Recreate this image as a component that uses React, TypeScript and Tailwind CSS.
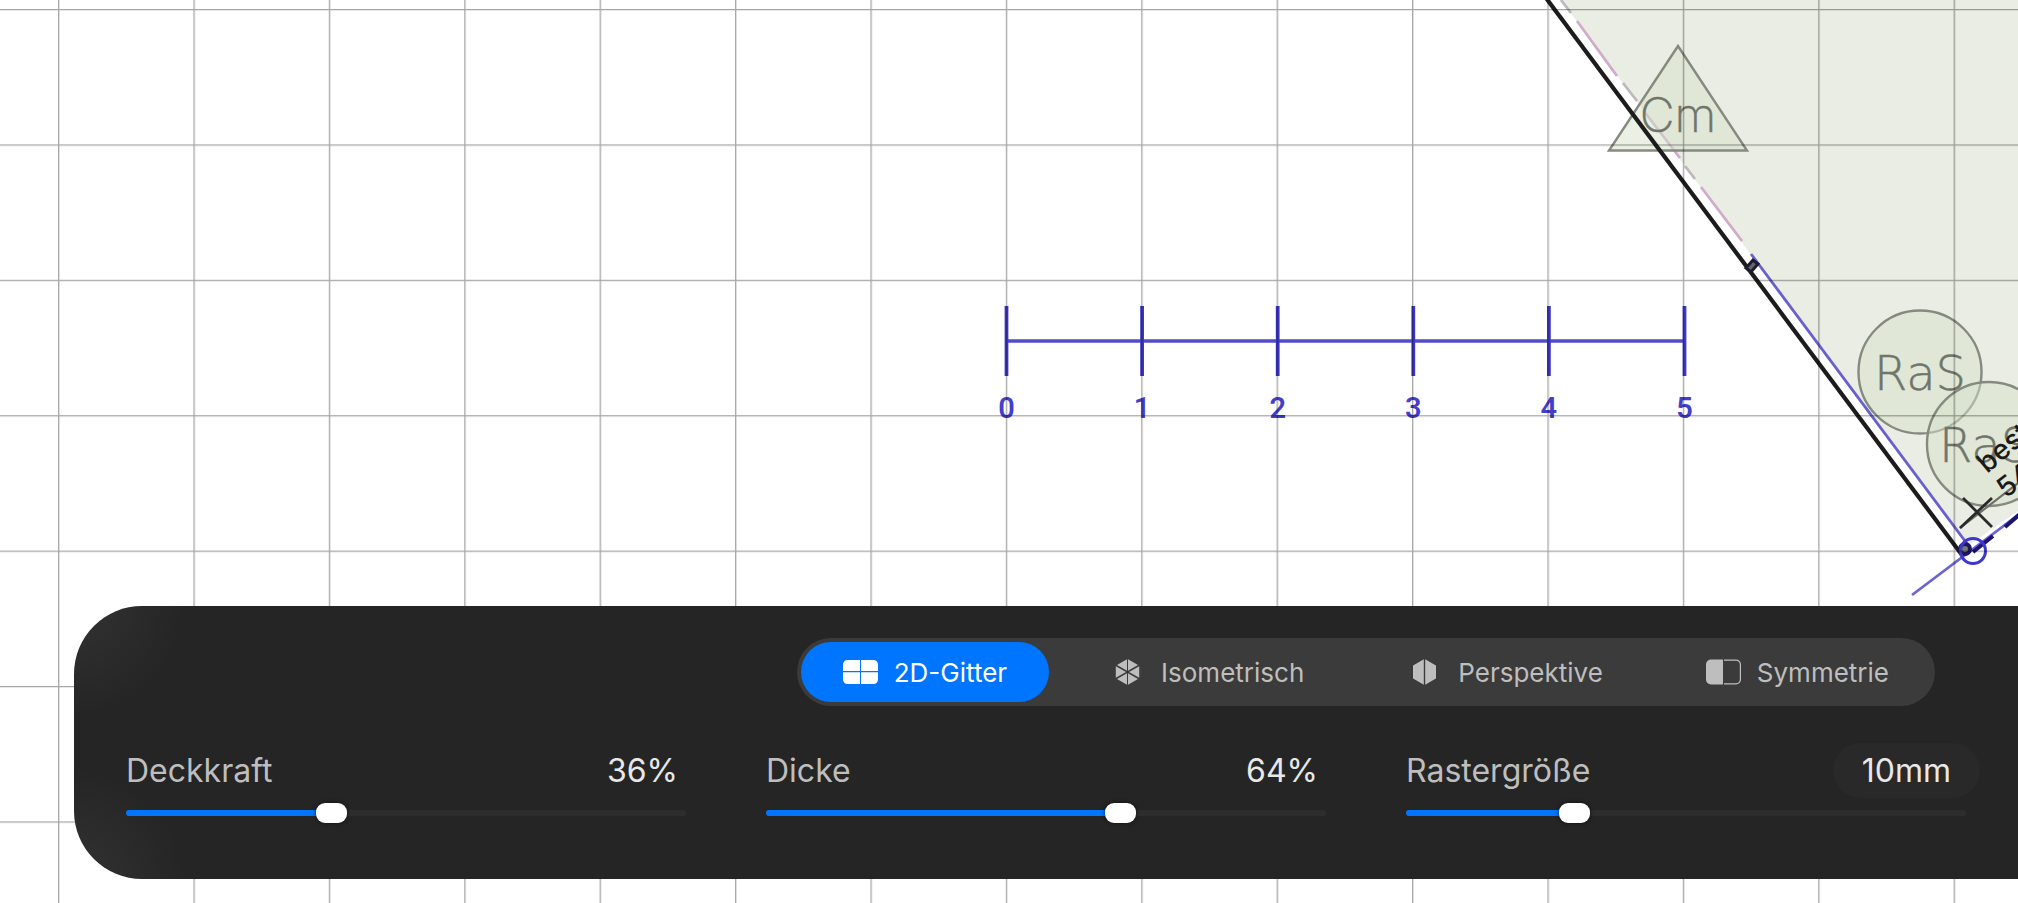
import { useState } from "react";
import type { ReactNode } from "react";

const TICKS = [0, 1, 2, 3, 4, 5];

function Plan() {
  return (
    <svg className="absolute inset-0 h-full w-full" aria-label="Plan">
      <defs>
        <pattern id="grid" x="58" y="9" width="135.4" height="135.4" patternUnits="userSpaceOnUse">
          <path d="M0 0.700H135.4M0.700 0V135.4" stroke="#000" strokeWidth="1.300" fill="none" />
        </pattern>
      </defs>

      <path d="M1561 0L1968 546L2018 511H4000V0Z" fill="#eaede4" />

      <g fill="none" strokeWidth="2.800">
        <path d="M1561 0L1571 13M1623 83L1637 101M1685 166L1695 179" stroke="#bdb9bd" />
        <path d="M1577 21L1617 76M1643 110L1680 158M1701 187L1742 241" stroke="#d0abcc" />
      </g>

      <g stroke="#858a80" strokeWidth="2.400" fill="#d6e2c9" fillOpacity="0.5">
        <path d="M1678 46L1609 150.500H1747Z" />
        <circle cx="1920" cy="372" r="61.500" />
        <circle cx="1989" cy="444" r="62" />
      </g>

      <g fill="#70756b" stroke="#70756b" strokeWidth="0.500" fontWeight="200" fontSize="48">
        <text x="1678" y="132" textAnchor="middle" fontFamily="Inter, sans-serif">Cm</text>
        <text x="1920" y="390" textAnchor="middle" fontFamily="DejaVu Sans, sans-serif">RaS</text>
        <text x="1939" y="462" fontFamily="DejaVu Sans, sans-serif">RaS</text>
      </g>

      <path d="M1546 -2L1962 555" stroke="#1c1c1c" strokeWidth="4.200" />
      <path d="M1751 254L1968 545" stroke="#6a60cc" strokeWidth="2.800" />
      <path d="M1746 268L1753 260L1758 264L1751 272Z" fill="#666" stroke="#1b1b33" strokeWidth="3" />

      <path d="M1912 595L2018 515" stroke="#6a64d8" strokeWidth="2.800" />
      <path d="M1973 552L1993 536M2005 527L2020 514" stroke="#1b1570" strokeWidth="4" />
      <path d="M1960 528L2022 480" stroke="#6c6f69" strokeWidth="2.200" />
      <path d="M1963 498L1992 527M1960 528L1992 498" stroke="#2a2a2a" strokeWidth="2.800" />
      <circle cx="1965" cy="549" r="5" fill="#777" stroke="#1d1760" strokeWidth="4" />
      <circle cx="1973" cy="551" r="12.500" fill="none" stroke="#3f38cc" strokeWidth="3" />

      <g fill="#1a1a1a" fontFamily="Inter, sans-serif" fontWeight="500" fontSize="28">
        <text transform="translate(1987 474) rotate(-40)">best</text>
        <text transform="translate(2006 499) rotate(-38)">54</text>
      </g>

      <g stroke="#3f38c8" fill="none">
        <path d="M1006 341H1685" strokeWidth="3.600" strokeOpacity="0.9" />
        {TICKS.map((t) => (
          <path key={t} d={`M${1006.5 + t * 135.6} 306V376`} strokeWidth="3.800" />
        ))}
      </g>
      <g fill="#453ecb" fontFamily="Roboto, sans-serif" fontWeight="600" fontSize="29" textAnchor="middle">
        {TICKS.map((t) => (
          <text key={t} x={1006.5 + t * 135.6} y="418">{t}</text>
        ))}
      </g>

      <rect width="100%" height="100%" fill="url(#grid)" opacity="0.35" />
    </svg>
  );
}

const icons: Record<string, ReactNode> = {
  grid: (
    <svg width="35" height="26" viewBox="0 0 35 26" fill="currentColor">
      <path d="M4.500 1H17V12H0V5.500A4.500 4.500 0 0 1 4.500 1ZM18 1H30.500A4.500 4.500 0 0 1 35 5.500V12H18ZM0 13.200H17V25H4.500A4.500 4.500 0 0 1 0 20.500ZM18 13.200H35V20.500A4.500 4.500 0 0 1 30.500 25H18Z" />
    </svg>
  ),
  iso: (
    <svg width="35" height="26" viewBox="0 0 35 26" fill="currentColor">
      <path d="M17 0.300V11.800L7 6ZM18 0.300L28 6L18 11.800ZM5.800 7.200L16 13L5.800 18.800ZM29.200 7.200V18.800L19 13ZM17 14.200V25.700L7 20ZM18 14.200L28 20L18 25.700Z" />
    </svg>
  ),
  perspective: (
    <svg width="35" height="26" viewBox="0 0 35 26" fill="currentColor">
      <path d="M16.800 0.200V25.800L6.500 19.800Q6 19.500 6 19V7Q6 6.500 6.500 6.200ZM18.200 0.200L28.500 6.200Q29 6.500 29 7V19Q29 19.500 28.500 19.800L18.200 25.800Z" />
    </svg>
  ),
  symmetry: (
    <svg width="35" height="26" viewBox="0 0 35 26" fill="currentColor">
      <path d="M5 0.500H17V25.500H5A5 5 0 0 1 0 20.500V5.500A5 5 0 0 1 5 0.500Z" />
      <path d="M18 1.100H30A4.400 4.400 0 0 1 34.400 5.500V20.500A4.400 4.400 0 0 1 30 24.900H18" fill="none" stroke="currentColor" strokeWidth="1.200" />
    </svg>
  ),
};

const MODES = [
  { id: "grid", label: "2D-Gitter" },
  { id: "iso", label: "Isometrisch" },
  { id: "perspective", label: "Perspektive" },
  { id: "symmetry", label: "Symmetrie" },
];

type SliderProps = { id: string; label: string; initial: number; format: (v: number) => string; pill?: boolean };

function Slider({ id, label, initial, format, pill }: SliderProps) {
  const [value, setValue] = useState(initial);
  return (
    <div className="flex min-w-0 flex-col gap-[5px]">
      <div className="flex h-[55px] items-center justify-between">
        <label htmlFor={id} className="text-[32px] leading-10 text-[#bebebe]">
          {label}
        </label>
        {pill ? (
          <button
            type="button"
            className="-mr-[14px] h-full rounded-full bg-[#292929] px-[29px] text-[32px] leading-10 text-[#e8e8e8]"
          >
            {format(value)}
          </button>
        ) : (
          <output htmlFor={id} className="pr-2 text-[32px] leading-10 text-[#e8e8e8]">
            {format(value)}
          </output>
        )}
      </div>
      <input
        id={id}
        type="range"
        min={0}
        max={100}
        value={value}
        onChange={(e) => setValue(Number(e.target.value))}
        style={{ backgroundImage: `linear-gradient(to right, #0075ff ${value}%, #2d2d2d ${value}%)` }}
        className="my-[7px] block h-[6px] w-full cursor-pointer appearance-none rounded-full [&::-webkit-slider-thumb]:h-5 [&::-webkit-slider-thumb]:w-[31px] [&::-webkit-slider-thumb]:appearance-none [&::-webkit-slider-thumb]:rounded-[9px] [&::-webkit-slider-thumb]:bg-white [&::-webkit-slider-thumb]:shadow-[0_0_4px_rgba(0,0,0,0.6)]"
      />
    </div>
  );
}

export default function App() {
  const [mode, setMode] = useState("grid");
  return (
    <main className="relative flex min-h-screen flex-col justify-end overflow-hidden bg-white pb-6 pl-[74px] font-[Inter,'Liberation_Sans',sans-serif]">
      <Plan />
      <section className="relative flex flex-col gap-[37px] rounded-l-[68px] bg-[#252525] bg-[radial-gradient(circle_at_0_0,#323232,transparent_110px),radial-gradient(circle_at_0_100%,#323232,transparent_110px)] px-[52px] pt-8 pb-14">
        <div className="mr-[31px] flex gap-[19px] self-end rounded-full bg-[#3b3b3b] p-1">
          {MODES.map((m) => (
            <button
              key={m.id}
              type="button"
              aria-pressed={mode === m.id}
              onClick={() => setMode(m.id)}
              className={
                mode === m.id
                  ? "flex h-[60px] items-center gap-4 rounded-full bg-[#0075ff] px-[42px] text-[26px] text-white"
                  : "flex h-[60px] items-center gap-4 rounded-full px-[42px] text-[26px] text-[#bebebe]"
              }
            >
              {icons[m.id]}
              <span>{m.label}</span>
            </button>
          ))}
        </div>
        <div className="grid grid-cols-3 gap-20">
          <Slider id="opacity" label="Deckkraft" initial={36} format={(v) => `${v}%`} />
          <Slider id="thickness" label="Dicke" initial={64} format={(v) => `${v}%`} />
          <Slider id="gridsize" label="Rastergröße" initial={29} format={(v) => `${Math.round(v * 0.35)}mm`} pill />
        </div>
      </section>
    </main>
  );
}
